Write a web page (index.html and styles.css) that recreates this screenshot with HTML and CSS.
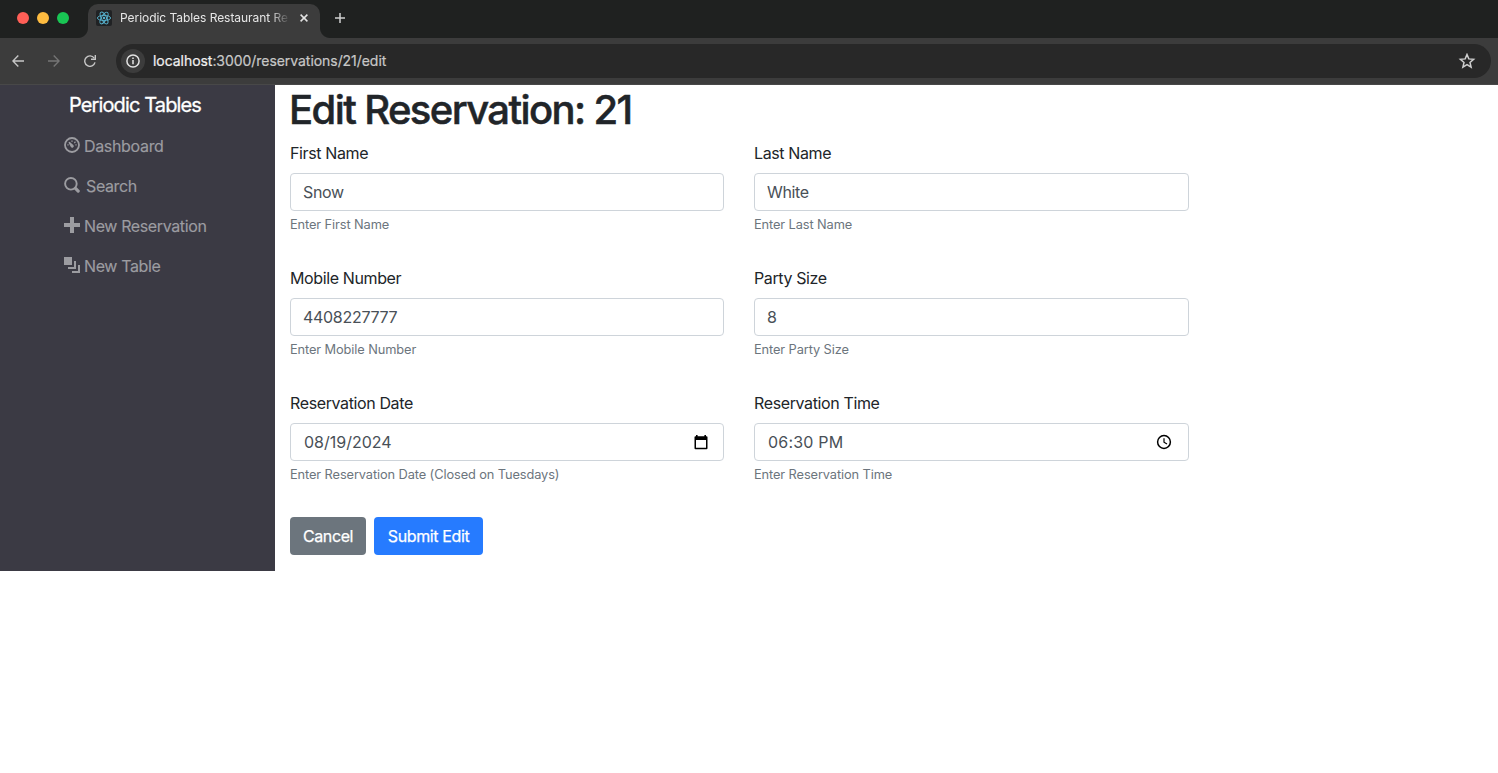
FILE: index.html
```html
<!DOCTYPE html>
<html lang="en">
<head>
<meta charset="utf-8">
<title>Periodic Tables Restaurant Reservations</title>
<link rel="stylesheet" href="styles.css">
</head>
<body>
<header class="browser">
  <div class="tabstrip">
    <div class="lights"><i class="light red"></i><i class="light yellow"></i><i class="light green"></i></div>
    <div class="tab">
      <svg class="favicon" width="16" height="16" viewBox="0 0 16 16" fill="none" stroke="#58b4d0" stroke-width=".9"><rect width="16" height="16" rx="2" fill="#202224" stroke="none"/><ellipse cx="8" cy="8" rx="6.6" ry="2.6"/><ellipse cx="8" cy="8" rx="6.6" ry="2.6" transform="rotate(60 8 8)"/><ellipse cx="8" cy="8" rx="6.6" ry="2.6" transform="rotate(120 8 8)"/><circle cx="8" cy="8" r="1.2" fill="#58b4d0" stroke="none"/></svg>
      <span class="tab-title">Periodic Tables Restaurant Re</span>
      <svg class="close" width="8" height="8" viewBox="0 0 8 8" stroke="#e3e3e3" stroke-width="1.5"><path d="M.6.6 7.4 7.4M7.4.6.6 7.4"/></svg>
    </div>
    <svg class="newtab" width="10" height="10" viewBox="0 0 10 10" stroke="#d0d0d0" stroke-width="1.5"><path d="M5 0v10M0 5h10"/></svg>
  </div>
  <div class="toolbar">
    <div class="nav-icons">
      <svg width="12" height="12" viewBox="0 0 12 12" fill="none" stroke="#c7c7c7" stroke-width="1.4"><path d="M12 6H1M6.3.6.9 6l5.4 5.4"/></svg>
      <svg width="12" height="12" viewBox="0 0 12 12" fill="none" stroke="#757575" stroke-width="1.4"><path d="M0 6h11M5.7.6 11.1 6l-5.4 5.4"/></svg>
      <svg width="12" height="12" viewBox="0 0 12 12" fill="none" stroke="#c7c7c7" stroke-width="1.4"><path d="M10.2 3.1A5.2 5.2 0 1 0 11 7.4"/><path d="M11.3 0v4.3H7"/></svg>
    </div>
    <div class="omnibox">
      <span class="info"><svg width="14" height="14" viewBox="0 0 14 14" fill="none" stroke="#e3e3e3" stroke-width="1.5"><circle cx="7" cy="7" r="6.1"/><path d="M7 6.1v4.2M7 3.6v1.5"/></svg></span>
      <span class="url"><b>localhost</b>:3000/reservations/21/edit</span>
      <svg class="star" width="18" height="16" viewBox="0 0 18 16" fill="none" stroke="#cfcfcf" stroke-width="1.5"><path d="m9 1.5 1.8 4.4 4.8.4-3.6 3.1 1.1 4.7L9 11.6l-4.1 2.5L6 9.4 2.4 6.3l4.8-.4z"/></svg>
    </div>
  </div>
</header>
<div class="page">
  <nav class="sidebar">
    <div class="brand">Periodic Tables</div>
    <a class="link"><svg width="16" height="16" viewBox="0 0 16 16"><circle cx="8" cy="8" r="7" fill="none" stroke="currentColor" stroke-width="1.8"/><path fill="currentColor" d="m4.4 5.6 1.2-.8L9.3 8a1.6 1.6 0 1 1-2.4 2.1zM7.3 3.4h1.4v1.4H7.3zM9.9 5.3l1.2-1 .8.9-1.3 1.4zM11.4 7.3h1.2v1.3h-1.2zM3.4 7.3h1.2v1.3H3.4z"/></svg><span class="t-dash">Dashboard</span></a>
    <a class="link"><svg width="16" height="16" viewBox="0 0 16 16" fill="none" stroke="currentColor"><circle cx="6.9" cy="6.8" r="5.8" stroke-width="1.9"/><path d="m11.5 11.4 2.7 2.7" stroke-width="3.2" stroke-linecap="round"/></svg><span class="t-search">Search</span></a>
    <a class="link"><svg width="16" height="16" viewBox="0 0 16 16" fill="currentColor"><path d="M6 0h4v6h6v4h-6v6H6v-6H0V6h6z"/></svg><span class="t-res">New Reservation</span></a>
    <a class="link"><svg width="16" height="16" viewBox="0 0 16 16"><path fill="currentColor" d="M0 0h8v8H0zM10 4h2v8H4v-2h6zM14 8h2v8H8v-2h6z"/></svg><span class="t-table">New Table</span></a>
  </nav>
  <main class="content">
    <h1 class="title">Edit Reservation: 21</h1>
    <form class="form">
      <div class="group"><label class="label">First Name</label><div class="control">Snow</div><small class="help">Enter First Name</small></div>
      <div class="group"><label class="label">Last Name</label><div class="control">White</div><small class="help">Enter Last Name</small></div>
      <div class="group"><label class="label">Mobile Number</label><div class="control num">4408227777</div><small class="help">Enter Mobile Number</small></div>
      <div class="group"><label class="label">Party Size</label><div class="control num">8</div><small class="help">Enter Party Size</small></div>
      <div class="group"><label class="label">Reservation Date</label><div class="control date"><span>08/19/2024</span><svg width="14" height="15" viewBox="0 0 14 15"><path fill="#000" fill-rule="evenodd" d="M2 0h1.6v1.3h6.8V0H12v1.3h.5q1 0 1 1v11q0 1-1 1h-11q-1 0-1-1v-11q0-1 1-1H2zM2 5v7.8h10V5z"/></svg></div><small class="help">Enter Reservation Date (Closed on Tuesdays)</small></div>
      <div class="group"><label class="label">Reservation Time</label><div class="control time"><span>06:30 PM</span><svg width="16" height="16" viewBox="0 0 16 16" fill="none" stroke="#000"><circle cx="8" cy="8" r="6.4" stroke-width="1.5"/><path d="M8 4.2v4l3 1.9" stroke-width="1.2"/></svg></div><small class="help">Enter Reservation Time</small></div>
    </form>
    <div class="actions"><button class="btn cancel">Cancel</button><button class="btn submit">Submit Edit</button></div>
  </main>
</div>
</body>
</html>
```
FILE: styles.css
```css
* { box-sizing: border-box; }
body { margin: 0; height: 773px; overflow: hidden; background: #fff; color: #212529; font: 400 16px/24px Inter, "Liberation Sans", sans-serif; letter-spacing: -0.38px; }
svg { display: block; flex: none; }
.browser { height: 85px; background: #3c3c3c; border-bottom: 1px solid #484848; }
.tabstrip { height: 38px; display: flex; background: #1f2120; }
.lights { width: 88px; height: 38px; padding: 12px 0 0 17px; display: flex; gap: 8px; }
.light { width: 12px; height: 12px; border-radius: 50%; }
.red { background: #ff5f57; }
.yellow { background: #febc40; }
.green { background: #19c654; }
.tab { position: relative; width: 232px; height: 34px; margin-top: 4px; padding: 0 12px 6px 8px; display: flex; align-items: center; background: #3c3c3c; border-radius: 10px 10px 0 0; }
.tab::before, .tab::after { content: ""; position: absolute; bottom: 0; width: 10px; height: 10px; }
.tab::before { left: -10px; background: radial-gradient(circle at 0 0, #1f2120 9.5px, #3c3c3c 10.5px); }
.tab::after { right: -10px; background: radial-gradient(circle at 100% 0, #1f2120 9.5px, #3c3c3c 10.5px); }
.tab-title { width: 168px; margin-left: 8px; white-space: nowrap; font-size: 12px; line-height: 18px; letter-spacing: -0.05px; color: #e6e6e6; -webkit-mask-image: linear-gradient(90deg, #000 150px, transparent 170px); mask-image: linear-gradient(90deg, #000 150px, transparent 170px); }
.close { margin-left: 12px; }
.newtab { margin: 13px 0 0 15px; }
.toolbar { height: 46px; padding: 6px 7px 6px 12px; display: flex; align-items: center; }
.nav-icons { width: 104px; display: flex; gap: 24px; }
.omnibox { flex: 1; height: 34px; padding: 0 15px 0 5px; display: flex; align-items: center; background: #282828; border-radius: 17px; }
.info { width: 24px; height: 24px; border-radius: 50%; background: #3c3c3c; display: flex; align-items: center; justify-content: center; }
.url { flex: 1; margin-left: 8px; font-size: 14px; letter-spacing: -0.05px; color: #c7c7c7; -webkit-text-stroke: .2px currentColor; }
.url b { font-weight: 400; color: #f0f0f0; }
.page { display: flex; }
.sidebar { width: 275px; height: 486px; background: #3b3a44; color: #9c9ca1; }
.brand { height: 41px; padding: 5px 0 0 69px; font-size: 20px; line-height: 30px; color: #fff; letter-spacing: -0.88px; -webkit-text-stroke: .3px #fff; }
.link { height: 40px; padding-left: 64px; display: flex; align-items: center; -webkit-text-stroke: .15px currentColor; }
.link svg { margin: 0 4px 2px 0; }
.t-search { margin-left: 2px; }
.t-dash { letter-spacing: -0.33px; }
.content { width: 914px; padding-left: 15px; }
.title { margin: 0 0 8px -1px; font-size: 40px; line-height: 50px; height: 48px; font-weight: 500; letter-spacing: -1.6px; -webkit-text-stroke: .5px currentColor; }
.form { display: grid; grid-template-columns: 434px 435px; column-gap: 30px; grid-auto-rows: 125px; }
.label { display: block; margin-bottom: 8px; }
.control { height: 38px; padding: 0 12px; border: 1px solid #ced4da; border-radius: 4px; display: flex; align-items: center; justify-content: space-between; color: #495057; }
.num { letter-spacing: -0.3px; }
.date { padding: 0 15px 0 13px; letter-spacing: 0; }
.time { padding: 0 16px 0 13px; letter-spacing: 0.2px; }
.help { display: block; margin-top: 4px; font-size: 12.8px; line-height: 19px; color: #6c757d; letter-spacing: -0.1px; }
.actions { display: flex; gap: 8px; margin-top: 1px; }
.btn { height: 38px; padding: 0; border: 0; border-radius: 4px; color: #fff; font: inherit; letter-spacing: inherit; -webkit-text-stroke: .25px #fff; }
.cancel { width: 76px; background: #6c757d; }
.submit { width: 109px; background: #267bff; }
```
